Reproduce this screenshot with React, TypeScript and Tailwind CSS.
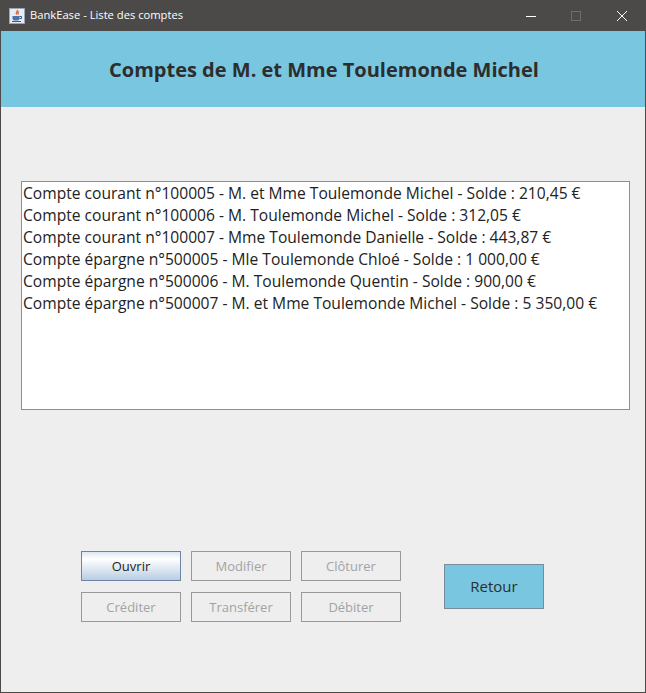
import React from "react";

const accounts = [
  "Compte courant n°100005 - M. et Mme Toulemonde Michel - Solde : 210,45 €",
  "Compte courant n°100006 - M. Toulemonde Michel - Solde : 312,05 €",
  "Compte courant n°100007 - Mme Toulemonde Danielle - Solde : 443,87 €",
  "Compte épargne n°500005 - Mle Toulemonde Chloé - Solde : 1 000,00 €",
  "Compte épargne n°500006 - M. Toulemonde Quentin - Solde : 900,00 €",
  "Compte épargne n°500007 - M. et Mme Toulemonde Michel - Solde : 5 350,00 €",
];

const JavaIcon = () => (
  <svg width="16" height="16" viewBox="0 0 16 16">
    <rect x="0.5" y="0.5" width="15" height="15" fill="#e8edf5" stroke="#9aa6b8" />
    <path d="M8 2c1.5 1.5-2 2.5-.5 4.5M10 3.5C8.5 4.5 8.5 5.5 9.5 6.5" fill="none" stroke="#d9541e" strokeWidth="1.2" />
    <path d="M3.5 8h7v2.5a2 2 0 0 1-2 2h-3a2 2 0 0 1-2-2z" fill="#4a74a8" />
    <path d="M10.5 8.5h2v2h-2M3 13.5h9" fill="none" stroke="#2f5a94" />
  </svg>
);

const SmallButton = ({ label }: { label: string }) => (
  <button className="w-[100px] h-[30px] pt-[1px] border border-[#999999] text-[13px] text-[#a3a3a3] bg-[#eeeeee]">{label}</button>
);

const App = () => {
  return (
    <div className="w-[646px] h-[693px] flex flex-col bg-[#eeeeee] border border-[#4b4a48] border-t-0 font-['Open_Sans','Noto_Sans',sans-serif]">
      <div className="h-[31px] shrink-0 bg-[#4b4a48] flex items-center pl-[9px] -mx-px">
        <JavaIcon />
        <span className="ml-[5px] text-[11.2px] text-white font-['Open_Sans',sans-serif]">BankEase - Liste des comptes</span>
        <div className="ml-auto flex items-center">
          <svg width="12" height="12" viewBox="0 0 12 12" className="mr-[33px]">
            <path d="M1 6.5h10" stroke="#ffffff" />
          </svg>
          <svg width="12" height="12" viewBox="0 0 12 12" className="mr-[34px]">
            <rect x="1.5" y="1.5" width="9" height="9" fill="none" stroke="#6f6e6c" />
          </svg>
          <svg width="12" height="12" viewBox="0 0 12 12" className="mr-[18px]">
            <path d="M1 1l10 10M11 1L1 11" stroke="#ffffff" />
          </svg>
        </div>
      </div>
      <div className="h-[76px] shrink-0 bg-[#78c6e0] flex items-center justify-center pt-[2px] pl-[2px]">
        <h1 className="text-[20px] font-bold text-[#2d2d2d] leading-none">Comptes de M. et Mme Toulemonde Michel</h1>
      </div>
      <div className="mt-[74px] ml-[20px] w-[609px] h-[229px] border border-[#8f8f8f] bg-white pl-[1px]">
        {accounts.map((a) => (
          <div key={a} className="h-[22px] leading-[22px] text-[15.6px] text-[#222222] whitespace-nowrap">{a}</div>
        ))}
      </div>
      <div className="mt-[141px] ml-[80px] flex items-center">
        <div className="grid grid-cols-3 gap-x-[10px] gap-y-[11px]">
          <button className="w-[100px] h-[30px] pt-[1px] border border-[#6d84a2] text-[13px] text-[#222222] bg-gradient-to-b from-[#dde8f3] via-white via-[25%] to-[#b8cde2]">Ouvrir</button>
          <SmallButton label="Modifier" />
          <SmallButton label="Clôturer" />
          <SmallButton label="Créditer" />
          <SmallButton label="Transférer" />
          <SmallButton label="Débiter" />
        </div>
        <button className="ml-[43px] w-[100px] h-[45px] border border-[#7a8c99] bg-[#78c6e0] text-[15px] text-[#2d2d2d]">Retour</button>
      </div>
    </div>
  );
};

export default App;
